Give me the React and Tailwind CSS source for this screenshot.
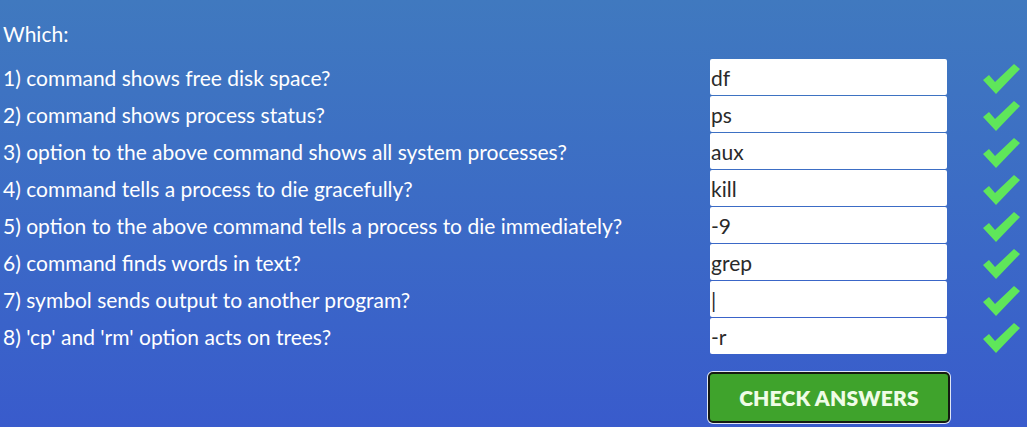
import React, { useState } from 'react';

const questions = [
  { q: '1) command shows free disk space?', a: 'df' },
  { q: '2) command shows process status?', a: 'ps' },
  { q: '3) option to the above command shows all system processes?', a: 'aux' },
  { q: '4) command tells a process to die gracefully?', a: 'kill' },
  { q: '5) option to the above command tells a process to die immediately?', a: '-9' },
  { q: '6) command finds words in text?', a: 'grep' },
  { q: '7) symbol sends output to another program?', a: '|' },
  { q: "8) 'cp' and 'rm' option acts on trees?", a: '-r' },
];

function Check() {
  return (
    <svg width="37" height="31" viewBox="0 0 37 31" className="mt-[5px]">
      <path d="M0 16 L6 11 L12 18 L31 0 L37 5 L13 30 Z" fill="#5fe65a" />
    </svg>
  );
}

export default function App() {
  const [answers, setAnswers] = useState(questions.map((x) => x.a));

  return (
    <div className="h-[427px] w-[1027px] overflow-hidden bg-gradient-to-b from-[#4079bf] to-[#395bcc] font-['Lato','Liberation_Sans',sans-serif] text-white">
      <p className="pl-[3px] pt-[20px] text-[21px] leading-[27px]">Which:</p>
      <div className="mt-[12px] flex flex-col gap-px">
        {questions.map((item, i) => (
          <div key={i} className="flex h-[36px] items-center">
            <span className="w-[710px] pl-[3px] text-[21px] leading-[27px]">{item.q}</span>
            <input
              value={answers[i]}
              onChange={(e) => {
                const next = [...answers];
                next[i] = e.target.value;
                setAnswers(next);
              }}
              className="h-[36px] w-[237px] rounded-[2px] bg-white px-[1px] text-[21px] text-[#2a2a2a] outline-none font-['Lato','Liberation_Sans',sans-serif]"
            />
            <div className="flex h-[36px] flex-1 items-start justify-end pr-[7px]">
              <Check />
            </div>
          </div>
        ))}
      </div>
      <div className="mt-[18px] pl-[708px]">
        <button className="h-[51px] w-[242px] rounded-[5px] border-2 border-[#151a12] bg-[#3fa32c] text-[21px] font-extrabold tracking-[0.2px] text-[#effce6] shadow-[0_0_0_1px_#dfe6f5]">
          CHECK ANSWERS
        </button>
      </div>
    </div>
  );
}
